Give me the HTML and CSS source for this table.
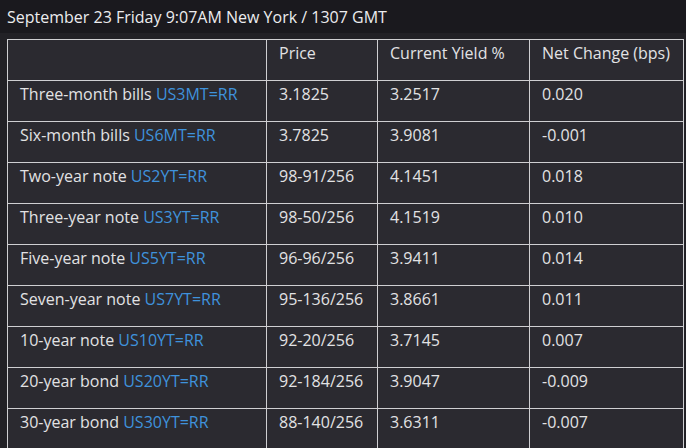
FILE: index.html
```html
<!DOCTYPE html>
<html>
<head>
<meta charset="utf-8">
<link rel="stylesheet" href="styles.css">
</head>
<body>
<div class="page">
  <div class="dateline">September 23 Friday 9:07AM New York / 1307 GMT</div>
  <div class="wrap">
    <table class="yields">
      <thead>
        <tr><th></th><th>Price</th><th>Current Yield %</th><th>Net Change (bps)</th></tr>
      </thead>
      <tbody>
        <tr><td>Three-month bills <a class="ric">US3MT=RR</a></td><td>3.1825</td><td>3.2517</td><td>0.020</td></tr>
        <tr><td>Six-month bills <a class="ric">US6MT=RR</a></td><td>3.7825</td><td>3.9081</td><td>-0.001</td></tr>
        <tr><td>Two-year note <a class="ric">US2YT=RR</a></td><td>98-91/256</td><td>4.1451</td><td>0.018</td></tr>
        <tr><td>Three-year note <a class="ric">US3YT=RR</a></td><td>98-50/256</td><td>4.1519</td><td>0.010</td></tr>
        <tr><td>Five-year note <a class="ric">US5YT=RR</a></td><td>96-96/256</td><td>3.9411</td><td>0.014</td></tr>
        <tr><td>Seven-year note <a class="ric">US7YT=RR</a></td><td>95-136/256</td><td>3.8661</td><td>0.011</td></tr>
        <tr><td>10-year note <a class="ric">US10YT=RR</a></td><td>92-20/256</td><td>3.7145</td><td>0.007</td></tr>
        <tr><td>20-year bond <a class="ric">US20YT=RR</a></td><td>92-184/256</td><td>3.9047</td><td>-0.009</td></tr>
        <tr><td>30-year bond <a class="ric">US30YT=RR</a></td><td>88-140/256</td><td>3.6311</td><td>-0.007</td></tr>
      </tbody>
    </table>
  </div>
</div>
</body>
</html>
```
FILE: styles.css
```css
html, body {
  margin: 0;
  padding: 0;
  background: #222126;
}
.page {
  width: 686px;
  height: 448px;
  overflow: hidden;
  font-family: "Open Sans", "Liberation Sans", sans-serif;
  color: #e2e2e4;
}
.dateline {
  background: #1a191e;
  height: 33px;
  padding: 0 7px;
  font-size: 16px;
  line-height: 34px;
  box-sizing: border-box;
  color: #ececee;
}
.wrap {
  padding: 6px 3px 0 7px;
}
.yields {
  border-collapse: collapse;
  width: 676px;
  table-layout: fixed;
  background: #2b2a30;
  font-size: 16px;
}
.yields th, .yields td {
  border: 1px solid #cfcfd2;
  text-align: left;
  font-weight: normal;
  vertical-align: top;
  padding: 3px 12px 0;
  height: 35px;
  line-height: 20px;
  box-sizing: border-box;
  white-space: nowrap;
}
.yields th:nth-child(1) { width: 259px; }
.yields th:nth-child(2) { width: 111px; }
.yields th:nth-child(3) { width: 152px; }
.yields th:nth-child(4) { width: 154px; }
.yields tr { height: 41px; }
.ric {
  color: #3f92dc;
  text-decoration: none;
}
```
